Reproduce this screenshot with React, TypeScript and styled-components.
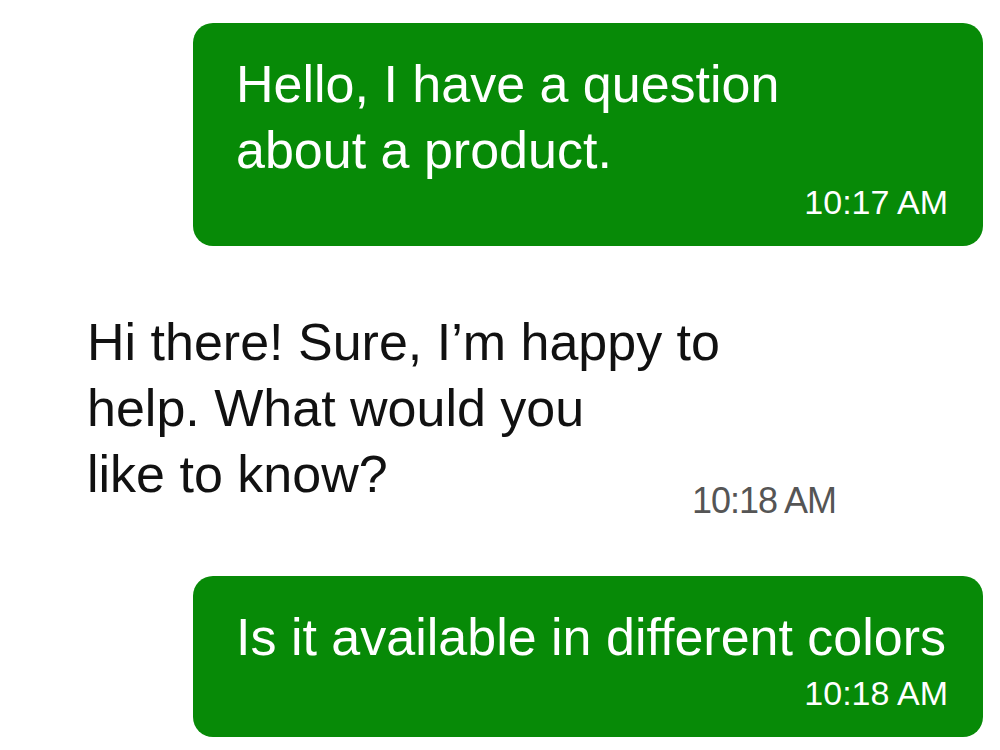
import React from "react";
import styled, { createGlobalStyle } from "styled-components";

const GlobalStyle = createGlobalStyle`
  html, body {
    margin: 0;
    padding: 0;
    background: #ffffff;
    font-family: "Liberation Sans", Arial, sans-serif;
  }
`;

const Thread = styled.div`
  width: 1000px;
  height: 750px;
  box-sizing: border-box;
  padding: 23px 17px 0 40px;
  display: flex;
  flex-direction: column;
  overflow: hidden;
`;

const Bubble = styled.div<{ $out?: boolean; $gap: number }>`
  box-sizing: border-box;
  margin-top: ${(p) => p.$gap}px;
  display: flex;
  flex-direction: column;
  border-radius: 20px;
  ${(p) =>
    p.$out
      ? `
    align-self: flex-end;
    width: 790px;
    background: #078a07;
    color: #ffffff;
    padding: 28px 35px 24px 43px;
  `
      : `
    align-self: flex-start;
    width: 840px;
    background: #ffffff;
    color: #111111;
    padding: 23px 44px 24px 47px;
  `}
`;

const Text = styled.div`
  font-size: 52px;
  line-height: 66px;
  white-space: nowrap;
`;

const Time = styled.div<{ $out?: boolean; $shift: number }>`
  align-self: flex-end;
  line-height: 40px;
  margin-top: ${(p) => p.$shift}px;
  ${(p) =>
    p.$out
      ? `
    font-size: 34px;
    color: #ffffff;
  `
      : `
    font-size: 36px;
    letter-spacing: -1px;
    color: #555555;
  `}
`;

type Msg = { out: boolean; lines: string[]; time: string; gap: number; shift: number };

const messages: Msg[] = [
  {
    out: true,
    lines: ["Hello, I have a question", "about a product."],
    time: "10:17 AM",
    gap: 0,
    shift: -1,
  },
  {
    out: false,
    lines: ["Hi there! Sure, I\u2019m happy to", "help. What would you", "like to know?"],
    time: "10:18 AM",
    gap: 40,
    shift: -26,
  },
  {
    out: true,
    lines: ["Is it available in different colors"],
    time: "10:18 AM",
    gap: 31,
    shift: 3,
  },
];

export default function App() {
  return (
    <>
      <GlobalStyle />
      <Thread>
        {messages.map((m, i) => (
          <Bubble key={i} $out={m.out} $gap={m.gap}>
            <Text>
              {m.lines.map((l, j) => (
                <React.Fragment key={j}>
                  {j > 0 && <br />}
                  {l}
                </React.Fragment>
              ))}
            </Text>
            <Time $out={m.out} $shift={m.shift}>
              {m.time}
            </Time>
          </Bubble>
        ))}
      </Thread>
    </>
  );
}
